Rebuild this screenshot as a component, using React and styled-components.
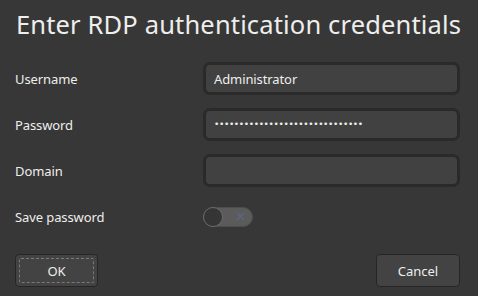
import React from "react";
import styled, { createGlobalStyle } from "styled-components";

const Global = createGlobalStyle`
  html, body { margin: 0; padding: 0; background: #373737; }
  body { font-family: "Noto Sans", "DejaVu Sans", sans-serif; color: #eeeeec; }
`;

const Dialog = styled.div`
  width: 478px;
  height: 296px;
  box-sizing: border-box;
  background: #373737;
  padding: 0 18px 0 15px;
  display: flex;
  flex-direction: column;
`;

const Title = styled.h1`
  margin: 0;
  height: 62px;
  display: flex;
  align-items: center;
  padding: 0 0 14px 1px;
  box-sizing: border-box;
  font-weight: 400;
  font-size: 25.5px;
  letter-spacing: 0.15px;
  color: #eeeeec;
  white-space: nowrap;
`;

const Form = styled.div`
  display: grid;
  grid-template-columns: 188px 1fr;
  grid-auto-rows: 33px;
  row-gap: 13px;
  align-items: center;
`;

const Label = styled.label`
  font-size: 13px;
  letter-spacing: -0.1px;
  color: #eeeeec;
`;

const Field = styled.div`
  height: 33px;
  box-sizing: border-box;
  border: 3px solid #2a2a2a;
  border-radius: 7px;
  background: #414141;
  display: flex;
  align-items: center;
  padding: 0 8px;
  font-size: 13px;
  letter-spacing: -0.1px;
  color: #eeeeec;
`;

const Dots = styled.span`
  font-size: 9px;
  letter-spacing: -0.35px;
  font-family: "DejaVu Sans", sans-serif;
  margin-top: -1px;
`;

const Switch = styled.div`
  position: relative;
  width: 50px;
  height: 20px;
  border-radius: 10px;
  background: #5b5b5b;
  box-sizing: border-box;
  border: 1px solid #4d4d4d;
  display: flex;
  align-items: center;
  justify-content: flex-end;
  padding-right: 7px;
`;

const Knob = styled.span`
  position: absolute;
  left: -1px;
  top: -1px;
  width: 20px;
  height: 20px;
  border-radius: 50%;
  box-sizing: border-box;
  background: #353535;
  border: 1px solid #6a6a6a;
`;

const Buttons = styled.div`
  margin-top: auto;
  margin-bottom: 9px;
  display: flex;
  justify-content: space-between;
`;

const Button = styled.button`
  position: relative;
  width: ${(p) => p.$w}px;
  height: 33px;
  box-sizing: border-box;
  border: 1px solid #262626;
  border-radius: 4px;
  background: #434343;
  color: #eeeeec;
  font-family: "Noto Sans", "DejaVu Sans", sans-serif;
  font-size: 13px;
  padding: 0;
  &::after {
    content: "";
    display: ${(p) => (p.$focus ? "block" : "none")};
    position: absolute;
    inset: 3px;
    border: 1px dashed #7a7a7a;
    border-radius: 2px;
  }
`;

export default function App() {
  return (
    <>
      <Global />
      <Dialog>
        <Title>Enter RDP authentication credentials</Title>
        <Form>
          <Label>Username</Label>
          <Field>Administrator</Field>
          <Label>Password</Label>
          <Field>
            <Dots>{"•".repeat(30)}</Dots>
          </Field>
          <Label>Domain</Label>
          <Field />
          <Label>Save password</Label>
          <div>
            <Switch>
              <Knob />
              <svg width="9" height="9" viewBox="0 0 9 9">
                <path d="M1.5 1.5L7.5 7.5M7.5 1.5L1.5 7.5" stroke="#5d6478" strokeWidth="2" strokeLinecap="round" />
              </svg>
            </Switch>
          </div>
        </Form>
        <Buttons>
          <Button $w={83} $focus>OK</Button>
          <Button $w={84}>Cancel</Button>
        </Buttons>
      </Dialog>
    </>
  );
}
